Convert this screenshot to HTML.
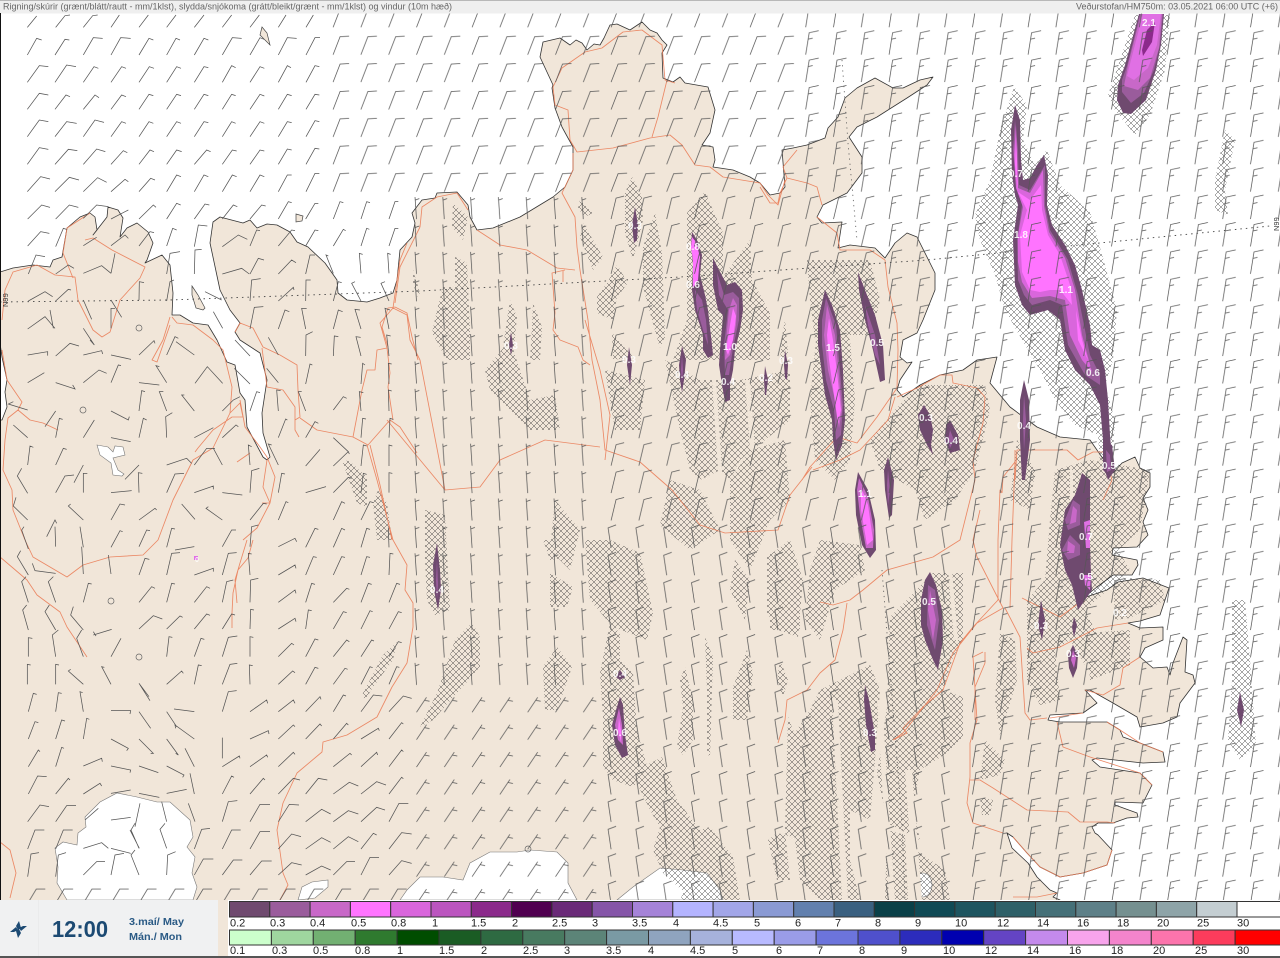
<!DOCTYPE html>
<html lang="is"><head><meta charset="utf-8"><title>Veðurstofan HM750m</title>
<style>html,body{margin:0;padding:0;background:#fff;width:1280px;height:958px;overflow:hidden}svg{display:block}text{font-family:"Liberation Sans",sans-serif}</style></head>
<body>
<svg xmlns="http://www.w3.org/2000/svg" width="1280" height="958" viewBox="0 0 1280 958">
<defs>
<pattern id="h" patternUnits="userSpaceOnUse" width="6" height="6"><path d="M0 0L6 6M6 0L0 6" stroke="#2a2a2a" stroke-width=".42" fill="none"/></pattern>
<pattern id="p1" patternUnits="userSpaceOnUse" x="22.3" y="2.3" width="27.8" height="27.4"><path d="M5 25l10-15M13 13l5 1" fill="none" stroke="#555" stroke-width=".75"/></pattern>
<pattern id="p2" patternUnits="userSpaceOnUse" x="22.3" y="2.3" width="27.8" height="27.4"><path d="M5 25l7-18 9-.5" fill="none" stroke="#555" stroke-width=".75"/></pattern>
<pattern id="p3" patternUnits="userSpaceOnUse" x="22.3" y="2.3" width="27.8" height="27.4"><path d="M5 25l-1.5-22M3.8 6l4-1.5" fill="none" stroke="#555" stroke-width=".75"/></pattern>
<pattern id="p3b" patternUnits="userSpaceOnUse" x="22.3" y="2.3" width="27.8" height="27.4"><path d="M5 25l5-21 8-2" fill="none" stroke="#555" stroke-width=".75"/></pattern>
<pattern id="p5" patternUnits="userSpaceOnUse" x="22.3" y="2.3" width="27.8" height="27.4"><path d="M5 25l-3-20 8-3" fill="none" stroke="#555" stroke-width=".75"/></pattern>
<pattern id="p4" patternUnits="userSpaceOnUse" x="22.3" y="2.3" width="27.8" height="27.4"><path d="M5 25l3.5-22 9.5-2M7.5 9.5l4.5-1" fill="none" stroke="#555" stroke-width=".75"/></pattern>
<pattern id="p6" patternUnits="userSpaceOnUse" x="22.3" y="2.3" width="27.8" height="27.4"><path d="M5 25l9-15 9 0" fill="none" stroke="#555" stroke-width=".75"/></pattern>
</defs>
<rect width="1280" height="958" fill="#fff"/>

<!-- land -->
<path fill="#f1e6d9" stroke="#333" stroke-width=".8" stroke-linejoin="round" d="M0 958L0 420 2 420 7 407 5 392 7 380 2 357 0 343 0 272 13 268 33 265 50 267 53 260 62 257 67 228 80 217 90 213 95 217 97 230 93 235 107 217 108 207 118 210 123 218 120 237 127 228 137 223 148 232 153 243 147 260 145 263 162 255 170 265 173 293 172 315 180 315 193 323 208 325 217 340 227 362 235 365 240 393 245 400 247 427 263 457 267 460 270 457 263 433 262 413 267 380 260 353 240 340 235 332 240 323 230 310 220 290 210 243 213 222 220 217 243 223 250 220 257 228 267 224 277 225 290 232 297 242 308 247 325 263 337 280 338 293 347 300 367 302 380 298 393 293 397 280 400 250 412 237 415 223 412 213 422 200 435 198 437 193 457 192 468 205 470 217 477 230 493 228 520 217 553 197 565 187 573 170 573 147 568 138 562 127 555 108 552 88 553 85 540 57 543 42 560 38 570 45 576 40 582 43 587 50 594 44 600 45 604 38 610 25 617 24 630 30 636 26 642 22 650 30 657 33 662 40 667 45 662 53 663 78 673 82 680 77 685 83 708 87 715 110 710 133 702 145 713 147 715 160 713 167 733 170 750 177 760 183 770 195 780 193 785 187 782 150 793 148 807 145 825 138 828 128 838 117 845 98 857 88 875 78 893 88 903 88 920 80 933 77 927 85 907 98 877 117 857 127 849 137 862 157 862 173 847 193 823 205 817 217 822 223 842 222 838 248 850 245 875 248 885 258 895 243 907 233 917 237 935 273 935 290 923 320 917 333 903 340 900 357 907 363 912 362 900 380 897 390 903 397 920 385 940 375 963 370 977 360 997 357 990 383 1010 407 1037 427 1060 437 1090 440 1113 473 1122 463 1135 457 1140 468 1150 473 1150 487 1143 498 1148 510 1143 522 1148 535 1137 547 1113 548 1112 555 1137 560 1138 565 1132 575 1113 575 1097 587 1087 595 1083 598 1107 590 1118 582 1143 578 1169 588 1160 615 1140 621 1128 623 1140 628 1163 627 1163 640 1145 648 1140 657 1153 668 1167 667 1170 675 1173 663 1183 637 1187 640 1185 672 1193 675 1195 683 1180 703 1177 717 1163 723 1140 727 1137 717 1113 703 1090 690 1085 690 1097 703 1083 713 1050 715 1048 720 1060 722 1107 722 1120 730 1123 737 1140 743 1163 752 1165 762 1143 763 1097 758 1092 760 1100 767 1140 773 1152 785 1143 803 1115 802 1115 805 1137 813 1138 817 1127 818 1113 823 1098 823 1092 827 1095 833 1098 835 1112 850 1107 865 1083 873 1060 877 1040 867 1027 853 1013 837 1007 833 1012 848 1028 863 1037 877 1050 890 1057 893 1053 897 1060 900 1060 958Z"/>
<path fill="#f1e6d9" stroke="#444" stroke-width=".7" d="M192 286L198 295 205 308 203 310 196 308 192 295ZM262 27L267 33 270 45 262 37 260 35ZM296 214L303 216 302 221 296 222Z"/>

<!-- glaciers / lakes -->
<path fill="#fff" stroke="#777" stroke-width=".6" d="M55 848L63 842 77 845 78 833 86 827 85 817 100 802 117 793 137 797 157 802 170 802 190 820 193 837 187 847 195 857 192 873 197 887 193 900 67 900 57 883 58 867ZM298 900L302 887 312 882 328 880 328 887 315 898ZM400 900L407 890 420 877 443 877 463 880 470 863 490 852 517 852 530 850 557 852 568 863 568 883 577 900ZM617 900L633 887 660 868 683 870 707 873 720 890 723 900ZM97 445L108 447 113 452 115 446 123 447 125 455 113 458 118 470 124 474 122 476 113 475 111 463 100 455Z"/>
<ellipse cx="923" cy="885" rx="9" ry="12" fill="#fff" stroke="#777" stroke-width=".6"/>
<g fill="none" stroke="#666" stroke-width=".7"><circle cx="139" cy="328" r="3"/><circle cx="83" cy="410" r="3"/><circle cx="111" cy="601" r="3"/><circle cx="139" cy="657" r="3"/><circle cx="528" cy="849" r="3"/></g>

<!-- hatch -->
<path fill="url(#h)" d="M1014 87L1027 105 1023 140 1035 165 1047 150 1060 185 1090 212 1105 265 1117 310 1113 360 1105 385 1115 420 1112 470 1100 465 1098 435 1075 425 1055 400 1040 370 1025 345 1005 310 995 275 980 240 975 215 990 180 1000 130Z
M1135 15L1170 15 1165 70 1150 115 1135 135 1115 110 1108 95 1120 60Z
M1225 130L1235 140 1225 190 1228 215 1215 210 1215 180Z
M1232 600L1245 600 1250 660 1256 745 1240 760 1228 740 1232 680Z
M1055 470L1090 460 1150 470 1140 530 1118 550 1130 570 1085 610 1100 640 1085 665 1070 640 1055 650 1060 700 1040 705 1027 680 1027 600 1045 580 1050 520Z
M1017 440L1035 470 1030 510 1010 500Z
M1113 577L1160 580 1165 600 1130 618 1115 620Z
M1087 633L1130 630 1130 665 1090 680Z
M1000 633L1015 640 1017 680 1005 720 1000 735 995 700Z
M985 740L1005 760 1000 775 980 780Z
M980 797L993 800 990 815 982 815Z
M918 385L985 385 990 410 975 470 955 500 925 520 915 490 880 470 870 440 895 410Z
M807 260L870 260 880 300 872 335 850 335 815 340 810 300Z
M820 300L850 340 855 400 850 460 835 480 815 460 810 400Z
M890 617L933 573 963 573 963 640 953 657 943 690 963 697 963 737 947 753 920 770 913 807 920 840 887 823 877 773 887 707Z
M820 690L870 665 880 690 875 760 870 820 850 810 850 860 860 900 820 900 800 880 790 800 790 740 810 710Z
M820 540L860 545 865 570 835 590 820 640 805 620 810 570Z
M887 830L905 835 908 900 885 900Z
M915 850L945 870 950 900 915 900Z
M425 510L445 515 450 610 435 615 427 600 425 560Z
M420 727L437 693 455 640 472 623 480 637 480 667 457 693 433 720Z
M543 540L573 540 570 557 550 560Z
M550 573L573 587 567 607 550 607Z
M585 540L610 540 640 553 653 613 647 640 613 627 590 600Z
M610 623L620 633 620 660 633 673 637 730 648 770 633 787 613 780 603 767 603 717 600 673Z
M632 773L662 757 677 800 700 830 710 827 733 857 740 900 693 900 663 873 653 850 660 827 650 810Z
M543 667L557 647 572 667 557 710 545 710Z
M685 667L693 700 693 740 683 755 677 747 683 707 680 680Z
M705 637L713 657 710 757 707 753 707 690Z
M747 650L753 673 747 720 733 720 733 687Z
M780 660L788 680 783 697 777 680Z
M767 557L790 540 803 580 798 637 778 630 767 613Z
M788 717L797 740 810 773 805 840 777 833 768 840 777 880 790 880 785 830Z
M805 740L820 730 820 810 805 810Z
M680 900L693 870 717 887 720 900Z
M453 203L468 217 463 240 452 227Z
M437 247L443 287 437 310 432 333 447 360 470 360 470 330 468 287 467 263 455 257 455 287 443 287Z
M413 270L420 293 417 297 413 283Z
M510 300L517 317 513 357 503 347 508 313Z
M533 303L542 327 540 360 530 360 532 327Z
M580 200L593 213 585 217 578 208Z
M583 223L603 257 593 270 580 237Z
M617 265L628 283 617 297 613 320 597 313 597 297 607 283Z
M612 333L633 357 613 360Z
M632 177L642 197 643 220 633 260 625 233 625 193Z
M655 213L662 253 665 337 660 348 652 320 643 287 643 247Z
M705 192L723 233 723 277 750 240 752 280 770 313 770 360 673 360 687 320 687 213Z
M785 320L788 353 780 360 782 337Z
M485 370L510 340 530 400 555 395 560 430 530 430 490 390Z
M605 370L645 380 640 430 615 430 610 400Z
M665 360L700 380 740 380 790 370 790 420 740 460 730 480 720 470 700 480 690 470 680 430Z
M670 480L700 490 720 530 690 550 660 525Z
M730 480L750 450 785 440 790 500 770 520 750 570 730 540Z
M555 500L580 530 570 570 550 550Z
M770 550L800 580 800 630 770 630Z
M735 560L750 580 745 620 730 590Z
M343 463L348 460 367 477 367 507 357 503Z
M373 503L378 490 387 503 392 540 377 540Z
M362 695L383 655 397 642 393 660 373 687 365 700Z"/>
<!-- gaps between hatch streaks -->
<path fill="#f1e6d9" d="M832 700L838 700 848 900 842 900ZM877 700L882 700 895 900 889 900ZM905 770L912 770 922 900 914 900ZM712 380L716 380 722 470 718 470ZM745 380L750 380 755 450 750 450ZM948 570L952 570 958 640 954 640ZM1070 470L1073 470 1073 560 1070 560Z"/>

<!-- roads -->
<path fill="none" stroke="#ea7d58" stroke-width=".85" stroke-linejoin="round" opacity=".9" d="M2 320L5 290 13 272 37 265 55 275 75 277 78 300 93 330 102 337 110 332 120 300 140 278 145 267 112 250 93 238 85 240
M90 213L67 228 63 253 73 278
M2 350L7 380 22 402 18 410 8 418 5 440 3 470 12 490 13 510 25 540 33 557 67 577 83 565 110 557 143 555 158 540 173 500 193 460 213 448 230 413 240 403 243 417 232 417 213 430 198 448 195 452
M18 410L30 420 43 423 58 430
M0 557L13 568 27 580 37 595 60 612 67 627 87 657
M170 317L163 340 152 360 157 362 170 325
M172 317L177 323 193 325 213 340 223 350 232 387 230 413
M240 400L245 427 260 447 267 457 275 477 270 503 257 528 243 540
M267 460L263 487 270 503M262 503L270 503M237 462L250 453
M253 540L248 558 238 570 233 593 232 613 232 628M247 540L240 563 235 580 237 603
M235 332L240 323 253 328 263 347 280 355 297 365 298 390 300 417 295 420 295 430 299 437
M262 348L267 387 283 390 295 407 295 420
M300 418L317 430 353 437 368 445 390 420 400 427 417 453
M353 437L362 390 367 370 375 370 377 350 387 348 380 323 393 308 407 315 410 340 420 360
M393 308L397 280 400 260 407 243
M387 348L390 373 388 387 393 420
M367 445L377 480 393 540 407 565 405 590 413 603 413 627 407 663 392 687 377 717 347 735 323 742 322 752 297 773 283 803 277 830 283 873 288 885 280 900
M370 445L380 485 392 540
M0 842L10 850 16 873 10 898
M577 152L613 148 650 138 670 135 682 145 695 165 710 167 723 177 760 183 768 195 778 205 785 180
M577 152L570 140 568 110 555 105 553 87 562 68 585 52 602 48 623 32 642 30 662 45 665 80 675 83
M667 80L658 117 652 137
M573 153L573 170 562 193 575 217 577 247 580 270 588 320 592 360 600 400 605 450 640 462 672 490 700 525 725 533 778 530 790 495 812 467
M477 230L500 245 527 250 557 268 575 270
M565 270L552 273 555 313 553 330 560 340 578 347 583 360 590 365
M563 270L563 282
M420 227L422 207 437 197 457 193 468 210
M420 227L400 267 395 303M395 307L388 308 382 327 388 347M395 307L407 313 412 337 418 360
M420 360L445 490 480 487 500 460 545 440 600 447
M387 420L445 490M605 460L610 415 600 370 585 320
M885 260L888 287 897 323 898 350 897 388 877 417 857 443 837 437 810 467 802 480
M895 397L888 420 860 450 840 460 813 470
M822 205L817 187 807 183 787 178 783 167 797 150
M787 178L780 193 778 203 770 203 760 187
M817 217L837 233 840 250 870 250 885 260
M897 397L917 388 940 375 952 375 953 383 977 388 985 397 983 423 973 460 975 480 960 540 933 557 887 570 863 590 850 600 833 605 820 602
M847 603L843 630 835 660 820 673 807 690 787 700 785 720 778 743
M1003 608L977 557 973 540 980 510M998 600L998 540 1000 490 1002 493M1010 608L1012 540 1015 462
M1003 608L977 623 953 653 937 690 903 733 893 740
M998 600L973 627 960 643 943 690 923 707 903 728 907 733 893 740
M1005 608L1020 637 1025 713 1030 720 1047 718
M1022 598L1060 617 1083 600
M1027 648L1033 653 1060 647 1097 628 1128 623
M983 652L973 657 977 720 970 743 970 777 967 803 973 823 1003 833
M985 652L985 663 975 687 975 720
M970 780L980 780 993 788 1027 810 1068 812 1080 822 1107 822 1115 823
M1057 722L1063 747 1090 757
M1085 690L1103 695 1120 685 1123 668 1140 657
M1015 480L1017 450 1067 450 1078 460 1093 452 1107 452 1110 473 1112 480 1103 500
M1015 450L1015 462 1003 477 1002 493
M1112 850L1107 865 1083 873 1060 877 1040 867 1027 853 1013 837
M1090 757L1140 773 1152 785M1107 722L1120 730 1140 743 1163 752
M1083 713L1050 718M1057 893L1037 897 1013 897"/>
<circle cx="1083" cy="601" r="1.5" fill="#e8603a"/>

<!-- dotted lines -->
<path fill="none" stroke="#444" stroke-width=".9" stroke-dasharray="1.5 4" d="M0 302L170 300 420 291 680 277 927 260 1130 240 1270 226"/>
<path fill="none" stroke="#555" stroke-width=".8" stroke-dasharray="1.2 4" d="M842 60L848 143 857 240M882 570L902 823 905 900"/>

<!-- plumes -->
<g stroke-linejoin="round">
<path fill="#6f4a6f" d="M1139 14L1164 14 1161 45 1156 70 1146 100 1131 114 1123 113 1117 100 1118 85 1125 65Z"/>
<path fill="#9a5c9c" d="M1140 14L1163 14 1160 45 1154 70 1144 93 1131 103 1122 92 1122 80 1127 66Z"/>
<path fill="#c868c8" d="M1141 14L1162 14 1159 48 1150 78 1138 90 1124 86 1128 65Z"/>
<path fill="#e070e4" d="M1143 14L1161 14 1157 45 1148 68 1134 80 1127 76 1131 60Z"/>
<path fill="#8b2a8b" d="M1147 30L1155 22 1152 42 1143 56 1142 50Z"/>
<!-- NE big -->
<path fill="#6f4a6f" d="M1015 105L1020 120 1021 160 1023 180 1030 178 1037 165 1044 155 1048 175 1047 205 1052 225 1065 245 1075 265 1082 290 1090 325 1092 345 1100 350 1105 370 1108 400 1110 435 1113 470 1108 475 1103 470 1103 440 1100 405 1090 385 1075 370 1065 350 1060 320 1048 310 1030 315 1022 305 1015 285 1013 240 1018 205 1015 195 1012 175 1011 130Z"/>
<path fill="#9a5c9c" d="M1015 120L1018 150 1019 185 1030 190 1045 165 1045 205 1050 230 1068 260 1078 295 1085 330 1090 355 1100 375 1100 385 1085 375 1068 345 1062 305 1050 300 1032 305 1024 295 1018 280 1017 240 1022 205 1016 185 1013 150Z"/>
<path fill="#d966dc" d="M1016 125L1017 155 1018 188 1030 193 1043 170 1044 206 1049 232 1065 258 1075 290 1082 335 1092 372 1082 360 1070 335 1065 300 1050 296 1032 298 1022 282 1018 262 1018 235 1023 207 1016 188 1014 155Z"/>
<path fill="#ff74ff" d="M1016 140L1017 160 1018 192 1030 200 1041 185 1042 210 1048 235 1060 255 1070 285 1072 305 1060 290 1050 290 1040 292 1030 290 1022 272 1020 235 1027 210 1018 192 1015 165Z"/>
<path fill="#ff74ff" d="M1076 310L1082 340 1088 360 1078 340Z"/>
<path fill="#6f4a6f" d="M1103 440L1112 445 1115 470 1108 480 1103 465Z"/>
<path fill="#9a5c9c" d="M1106 450L1110 455 1111 470 1107 472Z"/>
<!-- a -->
<path fill="#6f4a6f" d="M692 232L697 240 702 255 700 275 705 295 708 310 712 345 713 355 708 358 703 350 703 335 695 310 692 290 693 265 691 245Z"/>
<path fill="#9a5c9c" d="M695 290L702 300 706 320 708 345 703 330 697 310Z"/>
<path fill="#ff74ff" d="M692 237L696 242 700 257 698 280 693 288 693 260 691 247Z"/>
<!-- b -->
<path fill="#6f4a6f" d="M713 258L718 268 727 285 735 282 742 290 743 310 740 330 735 350 733 370 730 385 730 400 725 402 722 385 719 365 720 350 723 315 718 310 713 285Z"/>
<path fill="#9a5c9c" d="M717 272L724 295 733 292 739 298 739 320 733 348 729 375 725 375 724 345 728 310 719 295Z"/>
<path fill="#c868c8" d="M733 298L737 305 736 325 730 355 725 360 727 330 729 310Z"/>
<path fill="#ff74ff" d="M733 308L736 316 733 340 728 355 726 350 730 325Z"/>
<!-- small -->
<path fill="#6f4a6f" d="M682 346L686 360 684 380 682 392 680 380 679 365ZM765 366L768 380 766 395 765 395 764 380ZM785 350L788 365 787 380 785 378 784 365ZM635 207L638 225 637 240 634 243 632 225ZM511 332L513 345 511 355 509 345ZM629 347L632 365 630 385 627 365ZM924 405L930 415 933 430 931 445 933 455 927 445 920 430 918 415ZM950 420L958 435 960 450 950 453 945 440 946 425ZM1024 380L1029 400 1030 440 1025 480 1022 480 1020 440 1020 400ZM888 457L894 480 892 515 889 518 885 490 884 470ZM1041 600L1045 620 1042 640 1038 625ZM1074 617L1077 625 1074 637 1072 627ZM865 685L869 700 875 735 875 750 871 752 866 725 864 700ZM1240 692L1244 710 1241 727 1237 710ZM437 543L440 570 441 590 438 610 434 590 433 565ZM620 670L625 677 620 680 616 677Z"/>
<path fill="#9a5c9c" d="M682 355L683 370 682 382 681 370ZM1024 395L1026 420 1024 450 1023 420ZM888 470L890 490 888 505 887 485ZM437 560L438 585 437 600 436 580ZM950 430L954 440 950 448 948 440Z"/>
<!-- 1.5 -->
<path fill="#6f4a6f" d="M825 290L832 305 840 330 843 370 845 420 842 445 836 460 833 440 832 420 825 395 818 345 818 320Z"/>
<path fill="#9a5c9c" d="M826 298L836 325 839 360 843 405 841 435 836 440 834 410 826 380 822 345 822 320Z"/>
<path fill="#c868c8" d="M827 305L835 335 838 365 842 410 839 428 835 400 828 370 824 335Z"/>
<path fill="#ff74ff" d="M829 318L833 340 837 372 841 410 838 424 834 395 829 360 827 335Z"/>
<!-- 0.5 -->
<path fill="#6f4a6f" d="M858 272L865 290 875 315 883 345 885 380 880 382 873 350 865 320 859 290Z"/>
<path fill="#9a5c9c" d="M865 305L875 335 880 365 875 355 868 325Z"/>
<!-- 1.1 -->
<path fill="#6f4a6f" d="M858 472L868 490 875 520 876 550 870 558 862 545 856 515 855 490Z"/>
<path fill="#c868c8" d="M859 478L868 497 874 530 873 548 866 548 860 515 857 490Z"/>
<path fill="#ff74ff" d="M861 487L868 505 873 540 867 545 861 510Z"/>
<!-- p -->
<path fill="#6f4a6f" d="M1082 473L1090 480 1090 520 1090 545 1091 575 1092 590 1085 600 1078 610 1072 585 1065 570 1060 545 1065 510 1075 495 1080 480Z"/>
<path fill="#9a5c9c" d="M1073 500L1080 505 1080 525 1068 530 1065 520ZM1070 535L1080 545 1080 555 1068 560 1062 550Z"/>
<path fill="#c868c8" d="M1073 506L1077 510 1076 522 1070 524ZM1068 541L1075 546 1074 553 1067 553Z"/>
<path fill="#e070e4" d="M1084 522L1090 520 1090 548 1086 548ZM1084 575L1091 575 1090 590 1085 585Z"/>
<!-- q -->
<path fill="#6f4a6f" d="M930 572L936 585 942 610 943 640 938 670 933 660 925 640 921 625 921 600 925 580Z"/>
<path fill="#9a5c9c" d="M928 585L935 590 939 620 935 650 927 625Z"/>
<path fill="#c868c8" d="M930 590L936 620 933 640 928 610Z"/>
<!-- t -->
<path fill="#6f4a6f" d="M1073 645L1078 655 1077 668 1073 678 1069 668 1068 655Z"/>
<path fill="#c868c8" d="M1073 650L1076 658 1074 668 1071 660Z"/>
<!-- x -->
<path fill="#6f4a6f" d="M620 697L623 705 625 735 628 755 622 758 615 745 612 725 616 710Z"/>
<path fill="#c868c8" d="M619 708L622 725 623 745 618 740 615 725Z"/>
<path fill="#ff74ff" d="M619 718L621 730 621 742 618 730Z"/>
<path fill="#e070e4" d="M194 556h4v4h-4z"/>
</g>

<!-- wind barbs: patterns -->
<rect x="328.1" y="2.3" width="472.6" height="191.8" fill="url(#p2)"/>
<rect x="800.7" y="2.3" width="500.4" height="191.8" fill="url(#p4)"/>
<rect x="411.5" y="194.1" width="194.6" height="493.2" fill="url(#p3)"/>
<rect x="411.5" y="687.3" width="194.6" height="219.2" fill="url(#p1)"/>
<rect x="606.1" y="194.1" width="278" height="328.8" fill="url(#p3b)"/>
<rect x="606.1" y="522.9" width="361.4" height="383.6" fill="url(#p5)"/>
<rect x="884.1" y="194.1" width="396" height="328.8" fill="url(#p4)"/>
<rect x="967.5" y="522.9" width="313" height="383.6" fill="url(#p4)"/>
<rect x="22.3" y="879.1" width="389.2" height="27.4" fill="url(#p6)"/>

<!-- wind barbs: explicit NW -->
<path transform="scale(.33333)" fill="none" stroke="#555" stroke-width="2.25" d="M82 82L110 48M167 82L195 47 210 45M250 82L278 47 293 45M333 82L358 45M417 82L445 45M500 82L528 45M583 82L612 45M667 82L695 45M750 82L778 45M835 82L858 45M918 82L940 45
M82 165L110 115 125 120M165 165L195 118 208 120M250 165L280 113 308 115M333 165L362 113 392 115M417 165L447 115 460 120M500 165L528 115 540 120M583 165L612 115 625 120M667 165L697 113 725 115M750 165L780 113 792 118M835 165L862 113 890 115M918 165L945 113 960 113
M82 247L118 197 145 200M165 247L200 195 228 200M250 247L282 200 295 205M333 247L365 200 378 205M417 247L448 200 462 205M500 247L530 200 543 205M583 247L612 200 625 203M667 247L695 197 707 203M750 247L780 200 793 205M835 247L862 197 873 203M918 247L945 197 958 200
M82 328L118 280 145 285M165 328L198 285 210 290M250 328L285 285 297 293M333 328L365 285 378 290M417 328L447 283 460 287M500 328L530 283 543 287M583 328L612 283 625 287M667 328L695 283 707 287M750 328L780 283 793 288M835 328L862 283 875 287M918 328L945 283 958 285
M82 410L118 360 145 365M165 410L200 365 230 370M250 410L285 360 312 367M333 410L365 365 378 370M417 410L447 365 460 370M500 410L530 365 543 370M583 410L612 365 625 368M667 410L695 365 707 370M750 410L780 365 793 370M835 410L862 365 875 368M918 410L945 362 958 365
M82 493L118 443 145 448M165 493L205 448 232 452M250 493L290 447 316 455M333 493L370 452 382 458M417 493L450 450 462 455M500 493L530 450 545 455M583 493L620 450 632 455M667 493L697 450 710 453M750 493L780 450 793 453M835 493L862 447 875 450M918 493L945 445 958 447
M82 575L122 530 150 537M165 575L208 532 237 540M250 575L293 533 320 547M333 575L375 538 385 545M417 575L452 535 465 540M500 575L530 525 543 530M583 575L612 525 625 530M667 575L697 525 710 530M750 575L780 525 793 530M835 575L862 525 875 525M918 575L945 520 958 520"/>
<path transform="translate(0,200) scale(.33333)" fill="none" stroke="#555" stroke-width="2.25" d="M83 57L125 15 150 22M167 57L208 15 235 22M250 55L290 15 325 20M333 57L375 35 385 30M417 57L460 15 468 22M500 57L530 10 542 15M583 57L615 12 628 15M667 57L700 15 712 20M750 57L785 15 797 18M835 57L865 5 875 8M917 57L945 10 955 10M1000 57L1020 5 1030 8M1083 57L1100 5 1110 8M1167 57L1185 5 1195 5
M83 138L122 95 148 100M167 140L190 85 200 88M250 137L280 118 290 112M333 137L375 105 385 115M417 138L450 95 462 98M500 138L518 85 530 90M583 140L595 75 622 78M667 140L715 105 742 118M750 138L770 90 780 92M835 138L875 90 885 92M917 138L945 90 955 92M1000 138L1030 88 1037 92M1083 138L1100 85 1108 88M1167 138L1185 85 1195 85
M85 222L108 165 135 170M167 222L205 195 222 205M250 220L305 197 333 220M333 220L345 160M500 222L510 160 540 155M583 222L585 150 605 148M667 222L725 205 748 222M750 222L775 175 792 180M835 222L875 180 888 188M917 222L930 165 945 165M1000 220L978 165 985 168M1083 220L1078 160 1088 163M1167 220L1163 160 1172 163
M85 303L135 275 158 290M167 303L205 268 213 270M250 300L275 358M333 300L365 352M417 300L418 245 432 248M500 303L510 245 522 240M750 303L755 240 782 236M835 303L880 262 882 270M917 303L918 240 932 240M1000 303L1015 245 1025 248M1083 303L1055 250 1065 245M1167 303L1143 250 1155 245
M83 387L135 350 165 385M150 330L160 385M333 385L333 325 345 325M750 387L763 322 790 320M835 387L855 330 868 335M917 387L905 325 920 325M1000 387L1015 330 1028 335M1083 387L1065 328 1080 330M1167 387L1155 325 1170 330
M250 385L283 435 270 420M615 275L665 300M640 335L668 385
M83 465L143 455 143 467M167 468L210 430 237 438M250 465L305 452 308 462M333 465L393 478M417 465L462 422 465 430M500 465L525 410 535 415M583 465L528 425M750 468L705 420M835 465L805 412M917 468L918 405 938 395M1000 468L1003 408 1015 410M1083 468L1068 410 1082 412M1167 468L1160 405 1172 408
M83 548L133 518M167 548L225 567 218 555M250 548L297 510 320 520M333 548L355 495 363 497M417 548L478 555M500 548L468 497 478 500M585 550L622 500 668 550M750 552L703 505M835 548L800 505M917 552L930 492 937 495M1083 552L1088 490 1095 495M1167 552L1165 490 1175 492
M83 630L25 612 40 605M167 633L135 680M333 633L385 660 388 650M417 633L425 572 435 575M500 633L478 575 490 575M583 633L545 585 553 585M667 633L700 600 720 590M750 633L770 575 780 578M835 633L830 570 842 572M917 633L895 575 905 575M1000 630L1030 590 1040 595M1083 633L1078 575 1090 578M1167 633L1165 570 1175 573
M83 713L40 675M167 713L178 655 188 658M250 713L283 660M333 713L392 725M417 713L430 655 440 660M500 713L497 650 517 638M583 713L640 683M667 713L708 675 715 680M835 713L857 657 862 660M917 713L945 665 955 670M1000 713L1045 755M1083 713L1088 655 1098 657M1167 713L1170 655 1180 658
M83 795L90 738 100 742M167 795L190 745 200 748M250 795L222 848M375 838L417 795M500 795L560 775 575 790M583 795L620 745 645 745M667 795L640 745M750 795L745 735 755 740M835 795L805 732 815 735M917 798L960 748M1000 798L1045 755 1048 762M1083 798L1090 735 1100 738M1167 798L1167 735 1177 738
M83 880L52 828 65 805M167 878L195 828 222 825M250 878L250 820 262 820M333 878L395 872M417 878L415 818 427 820M500 878L525 822 552 820M583 878L640 858 640 868M667 878L727 885M750 878L755 812 778 805M835 878L845 820 855 822M917 878L978 860M1000 878L1045 832 1055 835M1083 878L1090 820 1100 823M1167 878L1167 818 1177 820
M83 960L40 918 48 892M250 960L205 918 212 912M333 960L360 912 375 915M417 960L465 925 470 930M545 912L585 958M667 960L618 925 625 920M750 960L790 910 800 912M835 960L858 905 865 908M1000 960L1025 905 1035 910M1083 960L1110 905 1120 908M140 1010L165 960 170 970"/>
<path transform="translate(0,540) scale(.33333)" fill="none" stroke="#555" stroke-width="2.25" d="M85 27L65 -30 72 -40M167 20L165 -40M250 22L240 -40M333 22L360 -28 368 -25M417 20L440 -30 450 -28M500 22L515 -35 525 -33M583 20L525 30M667 20L695 -30 708 -30M750 20L755 -40 775 -45M835 20L885 -5 890 5M917 22L945 -35 955 -32M1000 22L1025 -35 1035 -30M1083 22L1100 -35 1110 -32M1167 22L1165 -38
M85 105L52 50 62 32M167 100L105 92 97 70M250 102L245 20M333 102L325 45M417 105L435 55 448 58M500 105L515 40 540 38M583 105L640 85 640 95M667 105L685 40 710 38M750 105L745 40 755 42M835 105L885 75 888 85M917 105L940 50 950 52M1000 105L1025 50 1035 52M1083 105L1100 50 1110 52M1167 105L1170 40 1180 42
M85 187L65 125 78 110M167 187L145 125 160 110M250 187L265 130 275 132M417 187L455 140 465 145M500 187L515 130 525 132M583 187L620 140 630 145M667 187L680 125 700 120M750 187L752 120 775 115M835 187L885 150 888 160M917 187L935 130 945 133M1000 187L1040 145 1048 148M1083 187L1105 130 1115 133M1167 187L1190 130 1200 133
M85 270L68 210 80 195M167 270L135 215 148 195M250 270L212 225 220 200M280 285L335 268M280 275L288 288M417 267L460 227 487 237M500 267L540 228 548 232M583 267L620 222 630 226M667 267L695 222 705 225M750 267L752 208 762 210M835 267L885 235 888 245M917 267L925 210 935 212M1000 267L1030 215 1040 218M1083 267L1110 212 1118 215M1167 267L1195 215 1205 218
M85 350L85 293 97 295M167 350L157 285 175 270M250 350L230 295 245 270M333 350L363 295M500 350L507 290 517 292M583 350L603 295 613 298M667 350L685 292 712 288M750 350L750 290 760 292M835 350L875 310 882 315M917 350L945 297 955 300M1000 350L1040 300 1048 305M1083 350L1115 300 1122 303M1167 350L1195 305 1205 308
M82 433L82 373 92 375M167 433L167 373 177 375M250 433L205 393 212 388M333 433L305 380 313 382M500 433L545 393 550 400M583 433L595 375 605 377M667 433L690 373 712 370M750 433L748 375 758 377M835 433L878 393 885 398M917 433L945 382 955 385M1000 433L1035 385 1043 388M1083 433L1110 380 1118 383M1167 433L1190 380 1198 382
M85 515L100 460 110 463M167 515L175 458 185 460M250 515L240 455 248 458M333 512L392 512 390 522M450 482L417 430 447 470M583 515L522 507M667 515L685 455 710 452M750 515L800 480 803 490M835 515L880 480 885 490M917 515L960 470 963 478M1000 515L1030 465 1038 468M1083 515L1120 465 1147 468M1167 515L1210 468 1235 475
M85 597L105 545 115 548M167 597L185 540 195 543M250 597L260 535 268 538M417 515L452 565 445 555M500 515L530 560M583 597L525 555 527 565M667 593L667 655M750 597L805 572 807 582M835 597L880 555 885 560M917 597L960 552 965 558M1000 597L1040 550 1045 555M1083 597L1135 565 1138 572M1167 597L1205 548 1210 552
M85 680L115 630 120 635M167 680L185 622 192 625M250 678L305 655 307 665M333 597L385 625 380 632M417 597L460 640 452 640M500 597L535 645 527 640M583 680L555 625M667 680L718 648 720 655M750 680L800 645 803 652M835 680L880 637 885 643M1000 680L1050 640 1055 645M1083 680L1130 637 1133 645M1167 680L1205 630 1210 635
M85 762L113 708 140 710M167 762L205 715 210 720M250 762L300 730 305 738M333 678L392 690 390 698M417 678L475 698M500 678L552 705 548 712M583 762L570 700M667 762L695 708 702 712M750 762L790 715 795 720M835 762L880 715 900 720M917 762L955 715 982 720M1000 762L1048 727 1075 738M1083 762L1130 725 1158 735M1167 762L1205 712 1210 716
M83 845L120 795 147 800M167 845L200 797 228 797M333 760L392 750M417 760L478 772M500 760L560 748M667 845L685 785 712 782M750 845L780 793 810 793M835 845L868 793 897 795M917 845L965 808 992 822M1000 845L1045 812 1075 822M1083 845L1130 802 1155 810M1167 845L1197 790 1225 790
M565 790L585 845M420 790L405 860M485 785L500 845M255 840L295 805M333 840L392 832M390 870L418 925M480 868L500 925
M83 927L105 870 133 870M167 927L190 870 218 870M250 925L305 908 325 925M333 925L392 940M417 925L393 870 405 850M500 925L480 868 495 850M583 927L605 868 630 865M667 927L695 870 722 870M750 927L780 875 810 875M835 927L875 882 903 890M917 927L965 893 992 907M1000 927L1045 890 1075 905M1083 927L1120 880 1130 885M1167 927L1205 878 1235 882
M83 1010L93 942 117 938M167 1010L175 945 198 938M250 1005L290 965 315 965M333 1005L345 945 372 940M417 1005L393 945 405 930M500 1005L503 945 527 935M583 1005L610 957 640 957M667 1005L700 960 727 960M750 1005L785 963 815 963M835 1005L875 968 905 975M917 1005L965 978 992 990M1000 1005L1040 965 1065 965M1083 1005L1110 952 1137 952M1167 1005L1205 962 1235 970"/>

<!-- plume labels -->
<g fill="#fff" font-size="10" font-weight="700" text-anchor="middle" opacity=".88">
<text x="1149" y="26">2.1</text><text x="1016" y="177">0.7</text><text x="1021" y="238">1.8</text><text x="1066" y="293">1.1</text><text x="1093" y="376">0.6</text><text x="693" y="250">0.8</text><text x="693" y="288">0.6</text><text x="730" y="350">1.0</text><text x="728" y="385">0.4</text><text x="682" y="378">0.4</text><text x="766" y="381">0.2</text><text x="786" y="364">0.3</text><text x="833" y="351">1.5</text><text x="877" y="346">0.5</text><text x="926" y="421">0.3</text><text x="951" y="444">0.4</text><text x="865" y="497">1.1</text><text x="929" y="605">0.5</text><text x="1086" y="540">0.7</text><text x="1086" y="580">0.5</text><text x="1041" y="629">0.3</text><text x="1073" y="657">0.3</text><text x="870" y="736">0.3</text><text x="620" y="736">0.6</text><text x="437" y="593">0.4</text><text x="1024" y="429">0.4</text><text x="1109" y="469">0.5</text><text x="635" y="229">0.3</text><text x="511" y="349">0.3</text><text x="629" y="363">0.3</text><text x="620" y="677">0.4</text><text x="1120" y="616">0.2</text><text x="197" y="562" font-size="7">0</text>
</g>

<!-- N99 -->
<text transform="translate(8,307) rotate(-90)" font-size="7.5" fill="#333">N99</text>
<text transform="translate(1279,231) rotate(-90)" font-size="7.5" fill="#333">N99</text>

<!-- header -->
<rect x="0" y="0" width="1280" height="13.5" fill="#efefef"/>
<rect x="0" y="0" width="1280" height=".8" fill="#aaa"/>
<text x="3" y="9.5" font-size="8.8" fill="#666" textLength="449" lengthAdjust="spacingAndGlyphs">Rigning/skúrir (grænt/blátt/rautt - mm/1klst), slydda/snjókoma (grátt/bleikt/grænt - mm/1klst) og vindur (10m hæð)</text>
<text x="1076" y="9.5" font-size="8.8" fill="#666" textLength="202" lengthAdjust="spacingAndGlyphs">Veðurstofan/HM750m: 03.05.2021 06:00 UTC (+6)</text>

<!-- left border -->
<rect x="0" y="13" width="1" height="945" fill="#111"/>

<!-- bottom panel -->
<rect x="0" y="900" width="218" height="56" fill="#f0f1f2"/>
<rect x="218" y="900" width="10" height="56" fill="#f1e6d9"/>
<rect x="38" y="900" width="1" height="56" fill="#eaebec"/>
<path fill="#1c4a73" d="M19 921L21 928 18 930 16 926ZM27 926L21 931 19 928 23 926ZM18 938L16 931 19 929 21 933ZM10 932L16 927 18 930 14 932Z"/>
<text x="52" y="937" font-size="23" font-weight="700" fill="#1c4a73" textLength="56" lengthAdjust="spacingAndGlyphs">12:00</text>
<text x="129" y="925" font-size="10.5" font-weight="700" fill="#2a5a85" textLength="55" lengthAdjust="spacingAndGlyphs">3.maí/ May</text>
<text x="129" y="940" font-size="10.5" font-weight="700" fill="#2a5a85" textLength="53" lengthAdjust="spacingAndGlyphs">Mán./ Mon</text>

<!-- legend -->
<rect x="228" y="900" width="1052" height="56" fill="#fff"/>
<g stroke="#333" stroke-width="1">
<rect x="229.5" y="901.5" width="40.3" height="15.5" fill="#6f4a6f"/><rect x="269.8" y="901.5" width="40.3" height="15.5" fill="#9a5c9c"/><rect x="310.1" y="901.5" width="40.3" height="15.5" fill="#c868c8"/><rect x="350.4" y="901.5" width="40.3" height="15.5" fill="#ff74ff"/><rect x="390.7" y="901.5" width="40.3" height="15.5" fill="#d966dc"/><rect x="431" y="901.5" width="40.3" height="15.5" fill="#bb55bf"/><rect x="471.3" y="901.5" width="40.3" height="15.5" fill="#8b2a8b"/><rect x="511.6" y="901.5" width="40.3" height="15.5" fill="#500050"/><rect x="551.9" y="901.5" width="40.3" height="15.5" fill="#6a2a78"/><rect x="592.2" y="901.5" width="40.3" height="15.5" fill="#8555a8"/><rect x="632.5" y="901.5" width="40.3" height="15.5" fill="#a583d8"/><rect x="672.8" y="901.5" width="40.3" height="15.5" fill="#b4b4ff"/><rect x="713.1" y="901.5" width="40.3" height="15.5" fill="#a2a6e8"/><rect x="753.4" y="901.5" width="40.3" height="15.5" fill="#8a9ad4"/><rect x="793.7" y="901.5" width="40.3" height="15.5" fill="#6280ae"/><rect x="834" y="901.5" width="40.3" height="15.5" fill="#3a6080"/><rect x="874.3" y="901.5" width="40.3" height="15.5" fill="#0a4048"/><rect x="914.6" y="901.5" width="40.3" height="15.5" fill="#104a55"/><rect x="954.9" y="901.5" width="40.3" height="15.5" fill="#1e5560"/><rect x="995.2" y="901.5" width="40.3" height="15.5" fill="#2e6068"/><rect x="1035.5" y="901.5" width="40.3" height="15.5" fill="#457078"/><rect x="1075.8" y="901.5" width="40.3" height="15.5" fill="#5e8088"/><rect x="1116.1" y="901.5" width="40.3" height="15.5" fill="#759090"/><rect x="1156.4" y="901.5" width="40.3" height="15.5" fill="#8ea4a8"/><rect x="1196.7" y="901.5" width="40.3" height="15.5" fill="#c4ced2"/><rect x="1237" y="901.5" width="44" height="15.5" fill="#fff"/>
<rect x="229.5" y="930" width="41.9" height="15" fill="#ccffcc"/><rect x="271.4" y="930" width="41.9" height="15" fill="#9fd69f"/><rect x="313.3" y="930" width="41.9" height="15" fill="#72b072"/><rect x="355.2" y="930" width="41.9" height="15" fill="#2f7a2f"/><rect x="397.1" y="930" width="41.9" height="15" fill="#004d00"/><rect x="439" y="930" width="41.9" height="15" fill="#1a5c24"/><rect x="480.9" y="930" width="41.9" height="15" fill="#2e6a42"/><rect x="522.8" y="930" width="41.9" height="15" fill="#487a60"/><rect x="564.7" y="930" width="41.9" height="15" fill="#5c8478"/><rect x="606.6" y="930" width="41.9" height="15" fill="#7a9aa4"/><rect x="648.5" y="930" width="41.9" height="15" fill="#8fa4bf"/><rect x="690.4" y="930" width="41.9" height="15" fill="#a6b2dc"/><rect x="732.3" y="930" width="41.9" height="15" fill="#b8baff"/><rect x="774.2" y="930" width="41.9" height="15" fill="#9a9ce8"/><rect x="816.1" y="930" width="41.9" height="15" fill="#6c74dc"/><rect x="858" y="930" width="41.9" height="15" fill="#4f50cc"/><rect x="899.9" y="930" width="41.9" height="15" fill="#2c2cbc"/><rect x="941.8" y="930" width="41.9" height="15" fill="#0000b0"/><rect x="983.7" y="930" width="41.9" height="15" fill="#6444c4"/><rect x="1025.6" y="930" width="41.9" height="15" fill="#c48aec"/><rect x="1067.5" y="930" width="41.9" height="15" fill="#f8a4ec"/><rect x="1109.4" y="930" width="41.9" height="15" fill="#f484cc"/><rect x="1151.3" y="930" width="41.9" height="15" fill="#fc74ac"/><rect x="1193.2" y="930" width="41.9" height="15" fill="#fc3c5c"/><rect x="1235.1" y="930" width="46" height="15" fill="#ff0000"/>
</g>
<g font-size="11" fill="#222" style="font-family:'Liberation Sans Narrow','Liberation Sans',sans-serif">
<text x="230" y="926.5">0.2</text><text x="270" y="926.5">0.3</text><text x="310" y="926.5">0.4</text><text x="351" y="926.5">0.5</text><text x="391" y="926.5">0.8</text><text x="432" y="926.5">1</text><text x="471" y="926.5">1.5</text><text x="512" y="926.5">2</text><text x="552" y="926.5">2.5</text><text x="592" y="926.5">3</text><text x="632" y="926.5">3.5</text><text x="673" y="926.5">4</text><text x="713" y="926.5">4.5</text><text x="754" y="926.5">5</text><text x="795" y="926.5">6</text><text x="835" y="926.5">7</text><text x="875" y="926.5">8</text><text x="915" y="926.5">9</text><text x="955" y="926.5">10</text><text x="997" y="926.5">12</text><text x="1037" y="926.5">14</text><text x="1077" y="926.5">16</text><text x="1117" y="926.5">18</text><text x="1157" y="926.5">20</text><text x="1197" y="926.5">25</text><text x="1237" y="926.5">30</text>
<text x="230" y="954">0.1</text><text x="272" y="954">0.3</text><text x="313" y="954">0.5</text><text x="355" y="954">0.8</text><text x="397" y="954">1</text><text x="439" y="954">1.5</text><text x="481" y="954">2</text><text x="523" y="954">2.5</text><text x="564" y="954">3</text><text x="606" y="954">3.5</text><text x="648" y="954">4</text><text x="690" y="954">4.5</text><text x="732" y="954">5</text><text x="776" y="954">6</text><text x="817" y="954">7</text><text x="859" y="954">8</text><text x="901" y="954">9</text><text x="943" y="954">10</text><text x="985" y="954">12</text><text x="1027" y="954">14</text><text x="1069" y="954">16</text><text x="1111" y="954">18</text><text x="1153" y="954">20</text><text x="1195" y="954">25</text><text x="1237" y="954">30</text>
</g>
<rect x="0" y="956" width="1280" height="2" fill="#555"/>
</svg>
</body></html>
